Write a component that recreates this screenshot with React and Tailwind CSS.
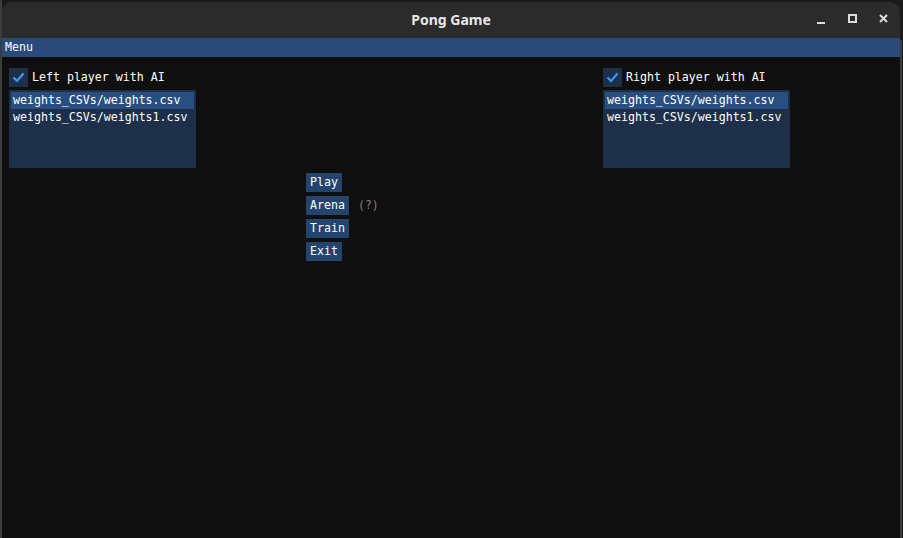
// Pong Game launcher window (ImGui style)

const mono = { fontFamily: '"DejaVu Sans Mono", "Liberation Mono", monospace' };

function CheckRow({ label }) {
  return (
    <div className="flex h-[19px] items-center gap-[4px]">
      <div className="flex h-[19px] w-[19px] items-center justify-center bg-[#1d2f49]">
        <svg width="13" height="13" viewBox="0 0 13 13">
          <polyline
            points="1.5,6.5 5,10 11.5,2.5"
            fill="none"
            stroke="#4296fa"
            strokeWidth="2.2"
          />
        </svg>
      </div>
      <span className="text-[11.6px] leading-none text-white">{label}</span>
    </div>
  );
}

function FileList() {
  return (
    <div className="mt-[3px] h-[78px] w-[187px] bg-[#1d2f49] px-[2px] pt-[2px]">
      <div className="flex h-[17px] items-center bg-[#284f80] px-[2px] text-[11.6px] text-white">
        weights_CSVs/weights.csv
      </div>
      <div className="flex h-[17px] items-center px-[2px] text-[11.6px] text-white">
        weights_CSVs/weights1.csv
      </div>
    </div>
  );
}

function Panel({ label }) {
  return (
    <div className="flex flex-col">
      <CheckRow label={label} />
      <FileList />
    </div>
  );
}

function Btn({ children }) {
  return (
    <div className="flex h-[19px] items-center bg-[#23456d] px-[4px] text-[11.6px] text-white">
      {children}
    </div>
  );
}

export default function App() {
  return (
    <div className="flex h-[538px] w-[903px] overflow-hidden bg-[#1a1a1a]">
      {/* desktop strip at the far left */}
      <div className="w-[2px] bg-[#3c3c3c]" />

      <div className="mt-[2px] flex w-[898px] flex-col">
        {/* title bar */}
        <div className="relative flex h-[36px] items-center justify-center rounded-t-[10px] bg-[#2b2b2b] pb-[2px]">
          <span
            className="text-[14px] font-bold text-[#e8e8e8]"
            style={{ fontFamily: '"Noto Sans", "Open Sans", sans-serif' }}
          >
            Pong Game
          </span>
          <div className="absolute right-[12px] top-[12px] flex items-center gap-[22px]">
            <svg width="9" height="10" viewBox="0 0 9 10">
              <rect x="0" y="8" width="8" height="2" fill="#dcdcdc" />
            </svg>
            <svg width="9" height="10" viewBox="0 0 9 10">
              <rect x="1" y="1" width="7" height="7" fill="none" stroke="#dcdcdc" strokeWidth="2" />
            </svg>
            <svg width="9" height="10" viewBox="0 0 9 10">
              <path d="M1 1 L8 8 M8 1 L1 8" stroke="#dcdcdc" strokeWidth="2" />
            </svg>
          </div>
        </div>

        {/* menu bar */}
        <div className="flex h-[19px] items-center bg-[#294a7a] px-[3px] text-[11.6px] text-white" style={mono}>
          Menu
        </div>

        {/* body */}
        <div className="flex flex-1 flex-col bg-[#0f0f0f] pt-[11px]" style={mono}>
          <div className="flex pl-[7px]">
            <Panel label="Left player with AI" />
            <div className="ml-[407px]">
              <Panel label="Right player with AI" />
            </div>
          </div>

          <div className="ml-[304px] mt-[5px] flex flex-col items-start gap-[4px]">
            <Btn>Play</Btn>
            <div className="flex items-center gap-[9px]">
              <Btn>Arena</Btn>
              <span className="text-[11.6px] text-[#808080]">(?)</span>
            </div>
            <Btn>Train</Btn>
            <Btn>Exit</Btn>
          </div>
        </div>
      </div>

      {/* right edge line */}
      <div className="mt-[40px] w-[2px] bg-[#3c3c3c]" />
    </div>
  );
}
